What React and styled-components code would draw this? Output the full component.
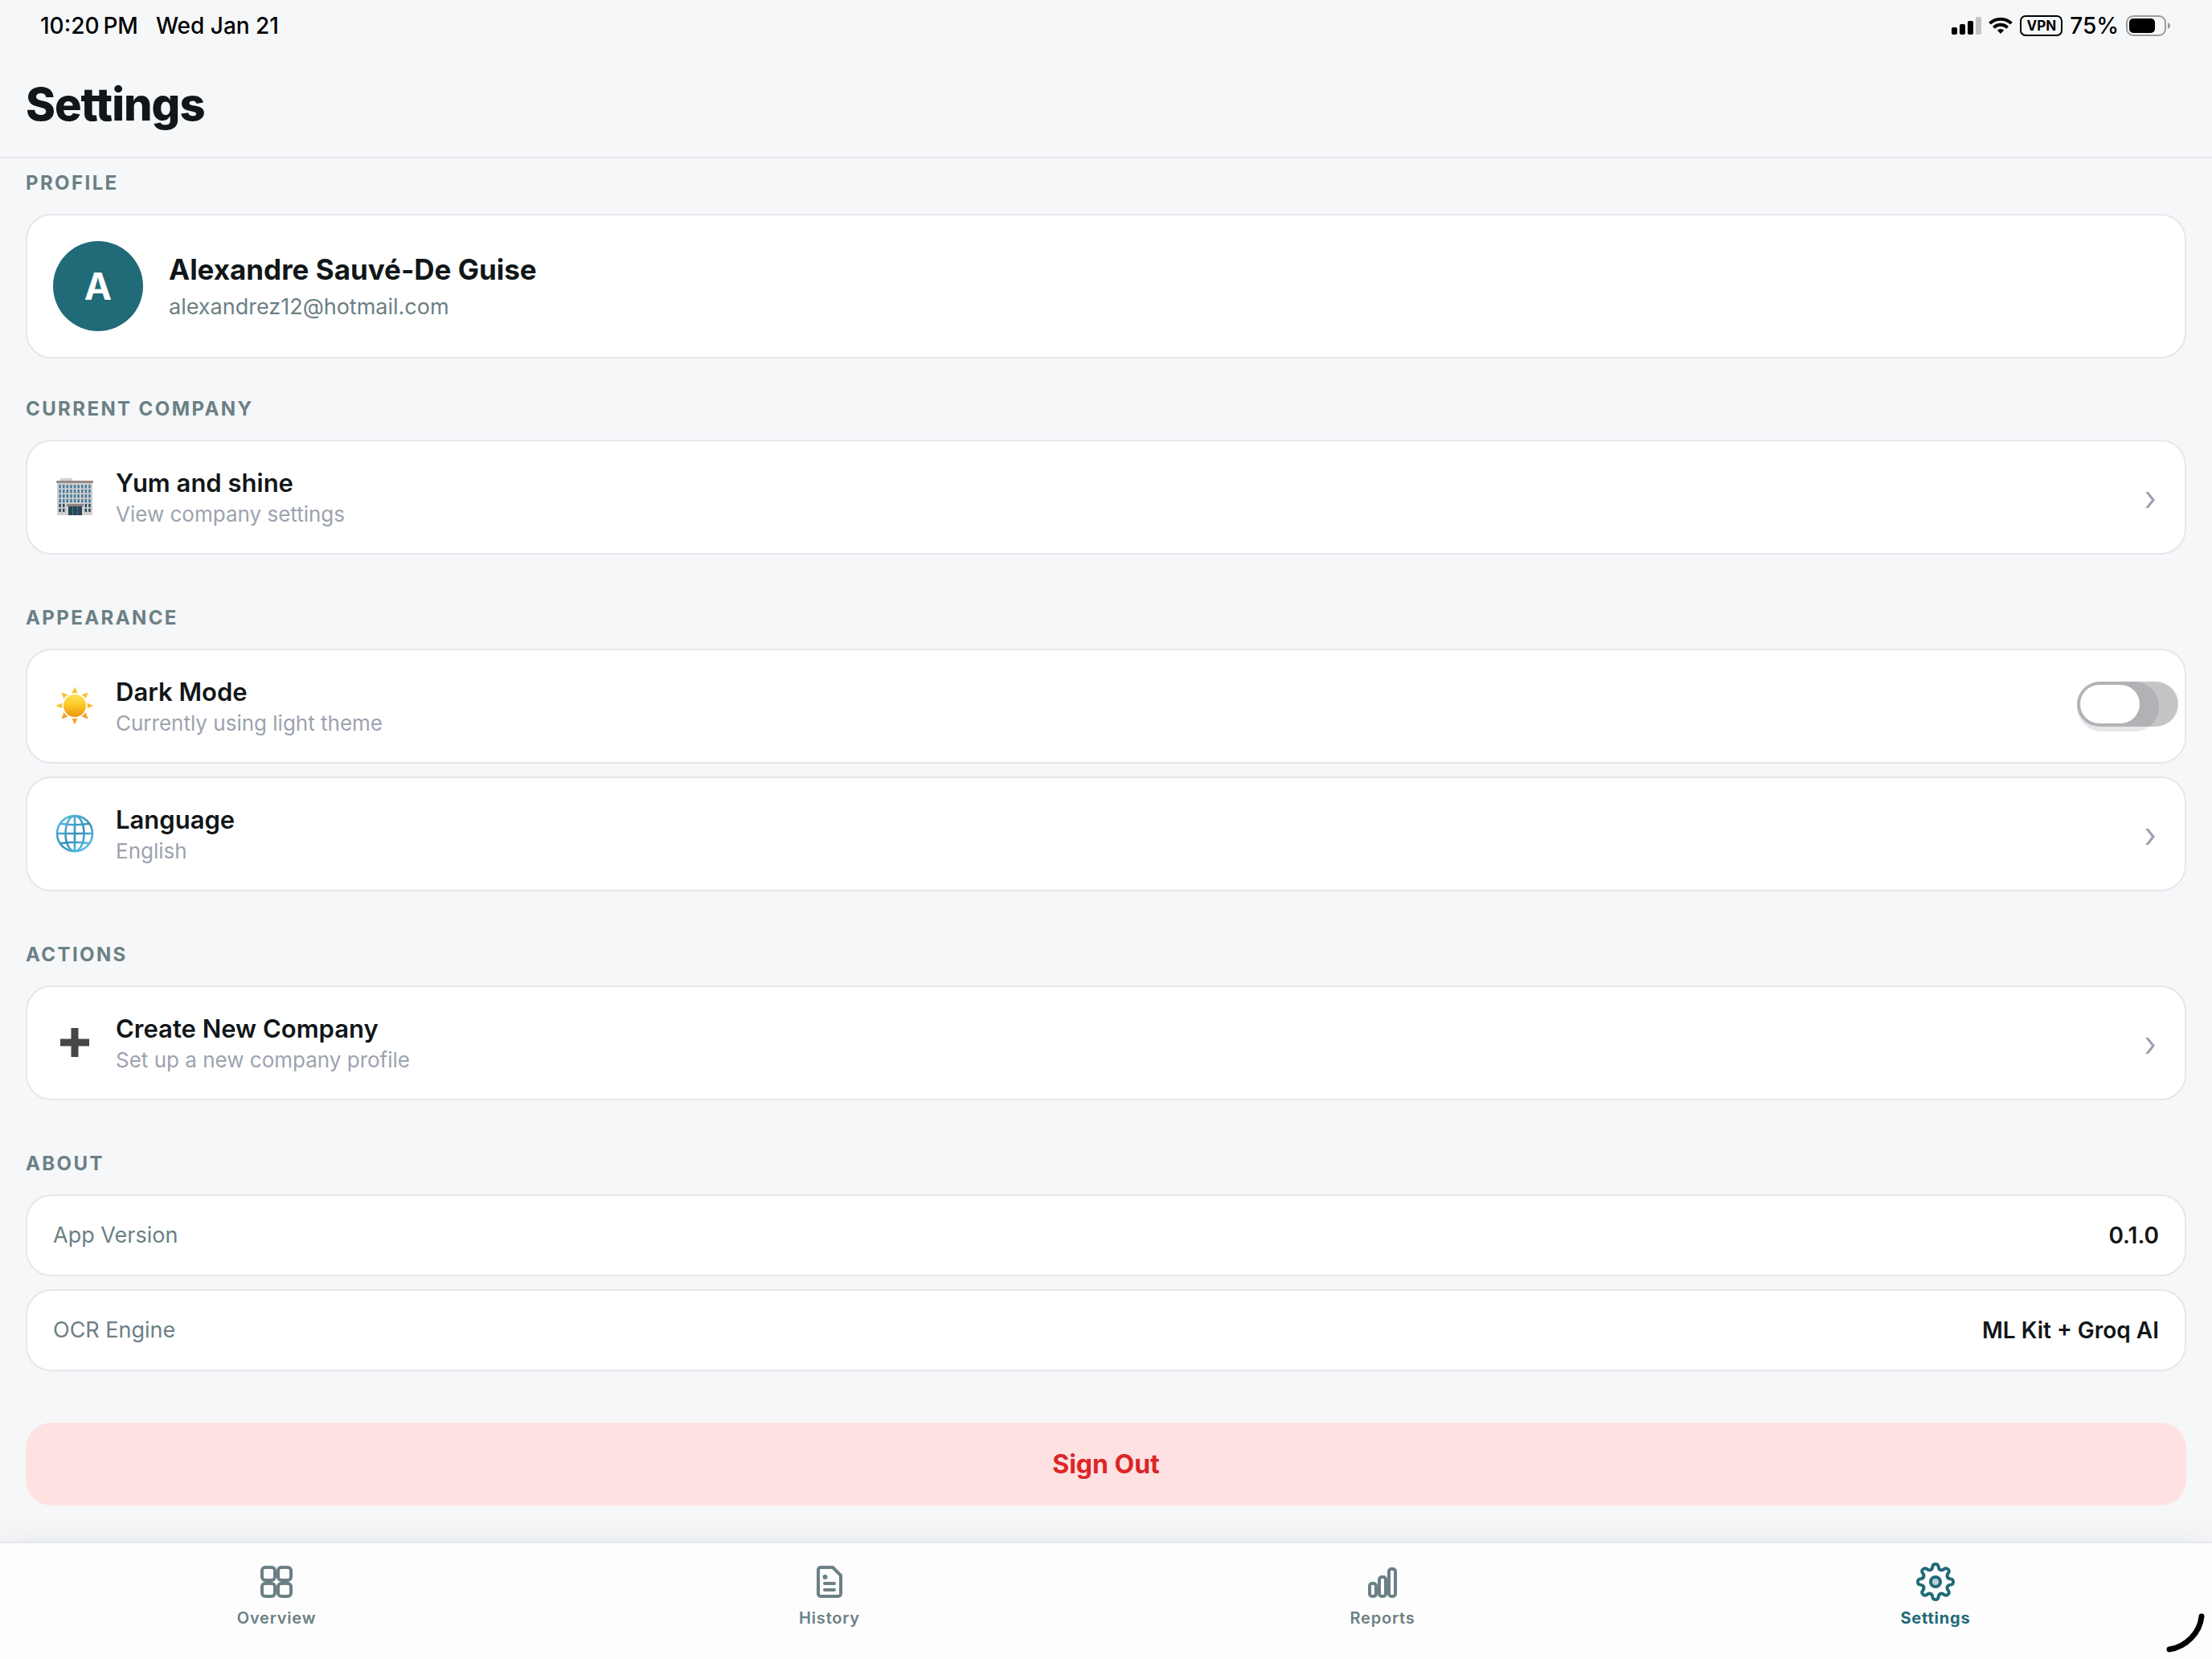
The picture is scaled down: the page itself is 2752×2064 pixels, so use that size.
import React, { useState } from "react";
import styled, { createGlobalStyle } from "styled-components";

const colors = {
  background: "#f6f7f9",
  surface: "#ffffff",
  border: "#e5e7eb",
  text: "#111618",
  secondary: "#6b8085",
  muted: "#9ca3af",
  primary: "#216a77",
  danger: "#dc2626",
  dangerSoft: "#fee2e2",
};

const GlobalStyle = createGlobalStyle`
  *, *::before, *::after {
    box-sizing: border-box;
  }
  body {
    margin: 0;
    background-color: ${colors.background};
    color: ${colors.text};
    font-family: Inter, "Liberation Sans", sans-serif;
  }
  button, input {
    font: inherit;
    color: inherit;
  }
`;

const Screen = styled.div`
  min-height: 100vh;
  display: flex;
  flex-direction: column;
`;

/* status bar */

const StatusBar = styled.div`
  height: 64px;
  padding: 0 52px 0 50px;
  display: flex;
  align-items: center;
  justify-content: space-between;
  color: #000;
  font-size: 28px;
  font-weight: 500;
  line-height: 34px;
`;

const StatusGroup = styled.div`
  display: flex;
  align-items: center;
  gap: ${(props) => props.$gap}px;
`;

const VpnBadge = styled.span`
  height: 26px;
  padding: 0 6px;
  border: 2px solid #000;
  border-radius: 7px;
  font-size: 17px;
  font-weight: 700;
  line-height: 22px;
`;

/* header */

const Header = styled.header`
  padding: 33px 32px 31px;
  border-bottom: 2px solid ${colors.border};
`;

const Title = styled.h1`
  margin: 0;
  font-size: 56px;
  font-weight: 800;
  line-height: 67px;
  letter-spacing: -1px;
`;

/* content */

const Content = styled.main`
  flex: 1;
  padding: 16px 32px 44px;
  display: flex;
  flex-direction: column;
  gap: 64px;
`;

const Section = styled.section`
  display: flex;
  flex-direction: column;
  gap: 16px;
  margin-bottom: ${(props) => (props.$tight ? "-16px" : "0")};
`;

const SectionTitle = styled.h2`
  margin: 0 0 8px;
  color: ${colors.secondary};
  font-size: 24px;
  font-weight: 700;
  line-height: 29px;
  letter-spacing: 0.1em;
`;

const Card = styled.div`
  width: 100%;
  padding: 32px;
  display: flex;
  align-items: center;
  background-color: ${colors.surface};
  border: 2px solid ${colors.border};
  border-radius: 32px;
  text-align: left;
`;

const CardButton = styled(Card).attrs({ as: "button", type: "button" })`
  cursor: pointer;
`;

const Avatar = styled.div`
  width: 112px;
  height: 112px;
  margin-right: 32px;
  border-radius: 50%;
  display: flex;
  align-items: center;
  justify-content: center;
  background-color: ${colors.primary};
  color: white;
  font-size: 46px;
  font-weight: 700;
`;

const Name = styled.div`
  font-size: 35px;
  font-weight: 700;
  line-height: 44px;
`;

const Email = styled.div`
  margin-top: 8px;
  color: ${colors.secondary};
  font-size: 27px;
  line-height: 34px;
`;

const IconSlot = styled.span`
  width: 54px;
  margin-right: 24px;
  padding-bottom: 2px;
  display: flex;
  justify-content: center;
`;

const RowText = styled.span`
  flex: 1;
  display: flex;
  flex-direction: column;
  gap: 4px;
`;

const RowTitle = styled.span`
  font-size: 31px;
  font-weight: 600;
  line-height: 39px;
`;

const RowSubtitle = styled.span`
  color: ${colors.muted};
  font-size: 26px;
  line-height: 32px;
`;

const SwitchBase = styled.span`
  width: 102px;
  height: 62px;
  border-radius: 31px;
  background-color: #e5e5ea;
`;

const Switch = styled.input`
  appearance: none;
  display: block;
  width: 126px;
  height: 56px;
  margin: 0;
  padding: 4px;
  border-radius: 28px;
  background-color: rgba(40, 40, 44, 0.27);
  cursor: pointer;

  &::before {
    content: "";
    display: block;
    width: 74px;
    height: 48px;
    border-radius: 24px;
    background-color: white;
  }
  &:checked {
    background-color: ${colors.primary};
  }
  &:checked::before {
    margin-left: auto;
  }
`;

const InfoList = styled.dl`
  margin: 0;
  display: flex;
  flex-direction: column;
  gap: 16px;
`;

const InfoRow = styled(Card)`
  justify-content: space-between;
  font-size: 28px;
  line-height: 34px;
`;

const InfoLabel = styled.dt`
  color: ${colors.secondary};
  font-size: 27px;
`;

const InfoValue = styled.dd`
  margin: 0;
  font-weight: 600;
`;

const SignOutButton = styled.button`
  width: 100%;
  padding: 32px;
  border: none;
  border-radius: 32px;
  background-color: ${colors.dangerSoft};
  color: ${colors.danger};
  font-size: 32px;
  font-weight: 700;
  line-height: 39px;
  cursor: pointer;
`;

/* tab bar */

const TabBar = styled.nav`
  position: sticky;
  bottom: 0;
  height: 146px;
  padding-top: 24px;
  display: grid;
  grid-template-columns: repeat(4, 1fr);
  align-items: start;
  background-color: #fdfdfd;
  border-top: 2px solid ${colors.border};
  box-shadow: 0 -4px 40px rgba(0, 0, 0, 0.06);
`;

const Tab = styled.a`
  display: flex;
  flex-direction: column;
  align-items: center;
  gap: 9px;
  color: ${(props) => (props.$active ? colors.primary : colors.secondary)};
  font-size: 20px;
  font-weight: ${(props) => (props.$active ? 700 : 600)};
  line-height: 25px;
  letter-spacing: 0.04em;
  text-decoration: none;
`;

const CornerMark = styled.svg`
  position: fixed;
  right: 8px;
  bottom: 8px;
`;

/* icons */

const SignalIcon = () => (
  <svg width="37" height="22" viewBox="0 0 37 22">
    <rect x="0" y="13" width="7" height="9" rx="2" />
    <rect x="10" y="9" width="7" height="13" rx="2" />
    <rect x="20" y="5" width="7" height="17" rx="2" />
    <rect x="30" y="0" width="7" height="22" rx="2" fill="#c4c5c7" />
  </svg>
);

const WifiIcon = () => (
  <svg width="30" height="22" viewBox="0 0 30 22" fill="none" stroke="#000" strokeWidth="4">
    <path d="M1.5 8.2a19.2 19.2 0 0 1 27 0" />
    <path d="M6.4 13.3a12.2 12.2 0 0 1 17.2 0" />
    <path d="M10.8 16.6a6 6 0 0 1 8.4 0L15 21z" fill="#000" stroke="none" />
  </svg>
);

const BatteryIcon = () => (
  <svg width="55" height="26" viewBox="0 0 55 26">
    <rect x="1" y="1" width="48" height="24" rx="8" fill="none" stroke="#9b9c9e" strokeWidth="2" />
    <rect x="4" y="4" width="32" height="18" rx="5" />
    <path d="M52 9c4 1.5 4 6.5 0 8z" fill="#9b9c9e" />
  </svg>
);

const BuildingIcon = () => {
  const windows = [];
  for (let row = 0; row < 6; row++) {
    for (let col = 0; col < 9; col++) {
      if (row > 3 && col > 1 && col < 7) continue;
      windows.push(
        <rect
          key={`${row}-${col}`}
          x={3.4 + col * 4.6}
          y={8.2 + row * 5.9}
          width="2.5"
          height="4.2"
          fill={row > 3 ? "#2c4a5c" : "#447a9c"}
        />
      );
    }
  }
  return (
    <svg width="46" height="46" viewBox="0 0 46 46">
      <rect x="5" y="0" width="15" height="4" fill="#d3d0ce" />
      <rect x="1" y="5" width="44" height="41" fill="#cfcfcf" />
      <rect x="0" y="3" width="46" height="3" rx="1" fill="#958b87" />
      {windows}
      <rect x="13" y="32" width="21" height="3" fill="#8d8480" />
      <rect x="15" y="35" width="17" height="11" fill="#27465a" />
      <path d="M20.5 35v11M26.5 35v11" stroke="#55717f" strokeWidth="1" />
    </svg>
  );
};

const SunIcon = () => (
  <svg width="48" height="48" viewBox="-24 -24 48 48">
    <defs>
      <linearGradient id="sun" x1="0" y1="0" x2="0" y2="1">
        <stop offset="0" stopColor="#fde25a" />
        <stop offset="0.45" stopColor="#fbcb27" />
        <stop offset="1" stopColor="#ee9412" />
      </linearGradient>
    </defs>
    {[0, 45, 90, 135, 180, 225, 270, 315].map((angle) => (
      <path
        key={angle}
        d="M0 -23.5 L3.6 -15.4 Q0 -16.8 -3.6 -15.4 Z"
        fill={angle > 90 && angle < 270 ? "#f2a32b" : "#f8bf30"}
        transform={`rotate(${angle})`}
      />
    ))}
    <circle r="14" fill="url(#sun)" />
  </svg>
);

const GlobeIcon = () => (
  <svg width="48" height="48" viewBox="-24 -24 48 48" fill="none" stroke="url(#globe)" strokeWidth="2.6">
    <defs>
      <linearGradient id="globe" gradientUnits="userSpaceOnUse" x1="-16" y1="-20" x2="16" y2="20">
        <stop offset="0" stopColor="#55bbe0" />
        <stop offset="0.55" stopColor="#3590b8" />
        <stop offset="1" stopColor="#5cc3e8" />
      </linearGradient>
    </defs>
    <circle r="22" />
    <ellipse rx="11.5" ry="22" />
    <path d="M0 -22V22M-22 0H22M-19 -12.5Q0 -9 19 -12.5M-19 12.5Q0 9 19 12.5" />
  </svg>
);

const PlusIcon = () => (
  <svg width="36" height="36" viewBox="0 0 36 36">
    <path d="M18 0v36M0 18h36" stroke="#464646" strokeWidth="9" />
  </svg>
);

const ChevronIcon = () => (
  <svg width="18" height="28" viewBox="0 0 18 28">
    <path d="M1 7h4l8 10-8 10H1l8-10z" fill={colors.muted} />
  </svg>
);

const OverviewIcon = () => (
  <svg width="48" height="48" viewBox="0 0 48 48" fill="none" stroke="currentColor" strokeWidth="4">
    <rect x="6" y="6" width="16" height="16" rx="4" />
    <rect x="26" y="6" width="16" height="16" rx="4" />
    <rect x="6" y="26" width="16" height="16" rx="4" />
    <rect x="26" y="26" width="16" height="16" rx="4" />
  </svg>
);

const HistoryIcon = () => (
  <svg width="48" height="48" viewBox="0 0 48 48" fill="none" stroke="currentColor" strokeWidth="4" strokeLinecap="round" strokeLinejoin="round">
    <path d="M13 6h15l10 10v23a3 3 0 0 1-3 3H13a3 3 0 0 1-3-3V9a3 3 0 0 1 3-3z" />
    <circle cx="18.5" cy="18" r="3" fill="currentColor" stroke="none" />
    <path d="M18 26h12M18 34h12" />
  </svg>
);

const ReportsIcon = () => (
  <svg width="48" height="48" viewBox="0 0 48 48" fill="none" stroke="currentColor" strokeWidth="4">
    <rect x="8" y="26" width="8" height="16" rx="3" />
    <rect x="20" y="18" width="8" height="24" rx="3" />
    <rect x="32" y="8" width="8" height="34" rx="3" />
  </svg>
);

// eight lobes, each one half wave up from a valley and one half wave down
const gearPath = () => {
  const at = (radius, side, deg) => {
    const a = (deg * Math.PI) / 180;
    const x = radius * Math.sin(a) + side * Math.cos(a);
    const y = -radius * Math.cos(a) + side * Math.sin(a);
    return `${x.toFixed(2)} ${y.toFixed(2)}`;
  };
  let d = `M${at(22, 0, 0)}`;
  for (let deg = 0; deg < 360; deg += 45) {
    d += `C${at(22, 6, deg)} ${at(16, -5, deg + 22.5)} ${at(16, 0, deg + 22.5)}`;
    d += `C${at(16, 5, deg + 22.5)} ${at(22, -6, deg + 45)} ${at(22, 0, deg + 45)}`;
  }
  return d + "Z";
};

const SettingsIcon = () => (
  <svg width="48" height="48" viewBox="-24 -24 48 48" fill="none" stroke="currentColor" strokeWidth="4">
    <path d={gearPath()} />
    <circle r="6" fill="#bccfd4" />
  </svg>
);

const tabs = [
  { label: "Overview", Icon: OverviewIcon },
  { label: "History", Icon: HistoryIcon },
  { label: "Reports", Icon: ReportsIcon },
  { label: "Settings", Icon: SettingsIcon },
];

const info = [
  { label: "App Version", value: "0.1.0" },
  { label: "OCR Engine", value: "ML Kit + Groq AI" },
];

const LinkRow = ({ icon, title, subtitle }) => (
  <CardButton>
    <IconSlot>{icon}</IconSlot>
    <RowText>
      <RowTitle>{title}</RowTitle>
      <RowSubtitle>{subtitle}</RowSubtitle>
    </RowText>
    <ChevronIcon />
  </CardButton>
);

const App = () => {
  const [dark, setDark] = useState(false);

  return (
    <Screen>
      <GlobalStyle />
      <StatusBar>
        <StatusGroup $gap={22}>
          <span>10:20{"\u2009"}PM</span>
          <span>Wed Jan 21</span>
        </StatusGroup>
        <StatusGroup $gap={9}>
          <SignalIcon />
          <WifiIcon />
          <VpnBadge>VPN</VpnBadge>
          <span>75%</span>
          <BatteryIcon />
        </StatusGroup>
      </StatusBar>
      <Header>
        <Title>Settings</Title>
      </Header>
      <Content>
        <Section $tight>
          <SectionTitle>PROFILE</SectionTitle>
          <Card>
            <Avatar>A</Avatar>
            <div>
              <Name>Alexandre Sauvé-De Guise</Name>
              <Email>alexandrez12@hotmail.com</Email>
            </div>
          </Card>
        </Section>
        <Section>
          <SectionTitle>CURRENT COMPANY</SectionTitle>
          <LinkRow icon={<BuildingIcon />} title="Yum and shine" subtitle="View company settings" />
        </Section>
        <Section>
          <SectionTitle>APPEARANCE</SectionTitle>
          <Card as="label">
            <IconSlot><SunIcon /></IconSlot>
            <RowText>
              <RowTitle>Dark Mode</RowTitle>
              <RowSubtitle>Currently using light theme</RowSubtitle>
            </RowText>
            <SwitchBase>
              <Switch type="checkbox" role="switch" checked={dark} onChange={() => setDark(!dark)} />
            </SwitchBase>
          </Card>
          <LinkRow icon={<GlobeIcon />} title="Language" subtitle="English" />
        </Section>
        <Section>
          <SectionTitle>ACTIONS</SectionTitle>
          <LinkRow icon={<PlusIcon />} title="Create New Company" subtitle="Set up a new company profile" />
        </Section>
        <Section>
          <SectionTitle>ABOUT</SectionTitle>
          <InfoList>
            {info.map((item) => (
              <InfoRow key={item.label}>
                <InfoLabel>{item.label}</InfoLabel>
                <InfoValue>{item.value}</InfoValue>
              </InfoRow>
            ))}
          </InfoList>
        </Section>
        <SignOutButton type="button">Sign Out</SignOutButton>
      </Content>
      <TabBar>
        {tabs.map(({ label, Icon }) => (
          <Tab key={label} href={`#${label.toLowerCase()}`} $active={label === "Settings"}>
            <Icon />
            {label}
          </Tab>
        ))}
      </TabBar>
      <CornerMark width="56" height="56" viewBox="0 0 56 56">
        <path d="M51 11C49 31 32 49 11 52" fill="none" stroke="#000" strokeWidth="7" strokeLinecap="round" />
      </CornerMark>
    </Screen>
  );
};

export default App;
